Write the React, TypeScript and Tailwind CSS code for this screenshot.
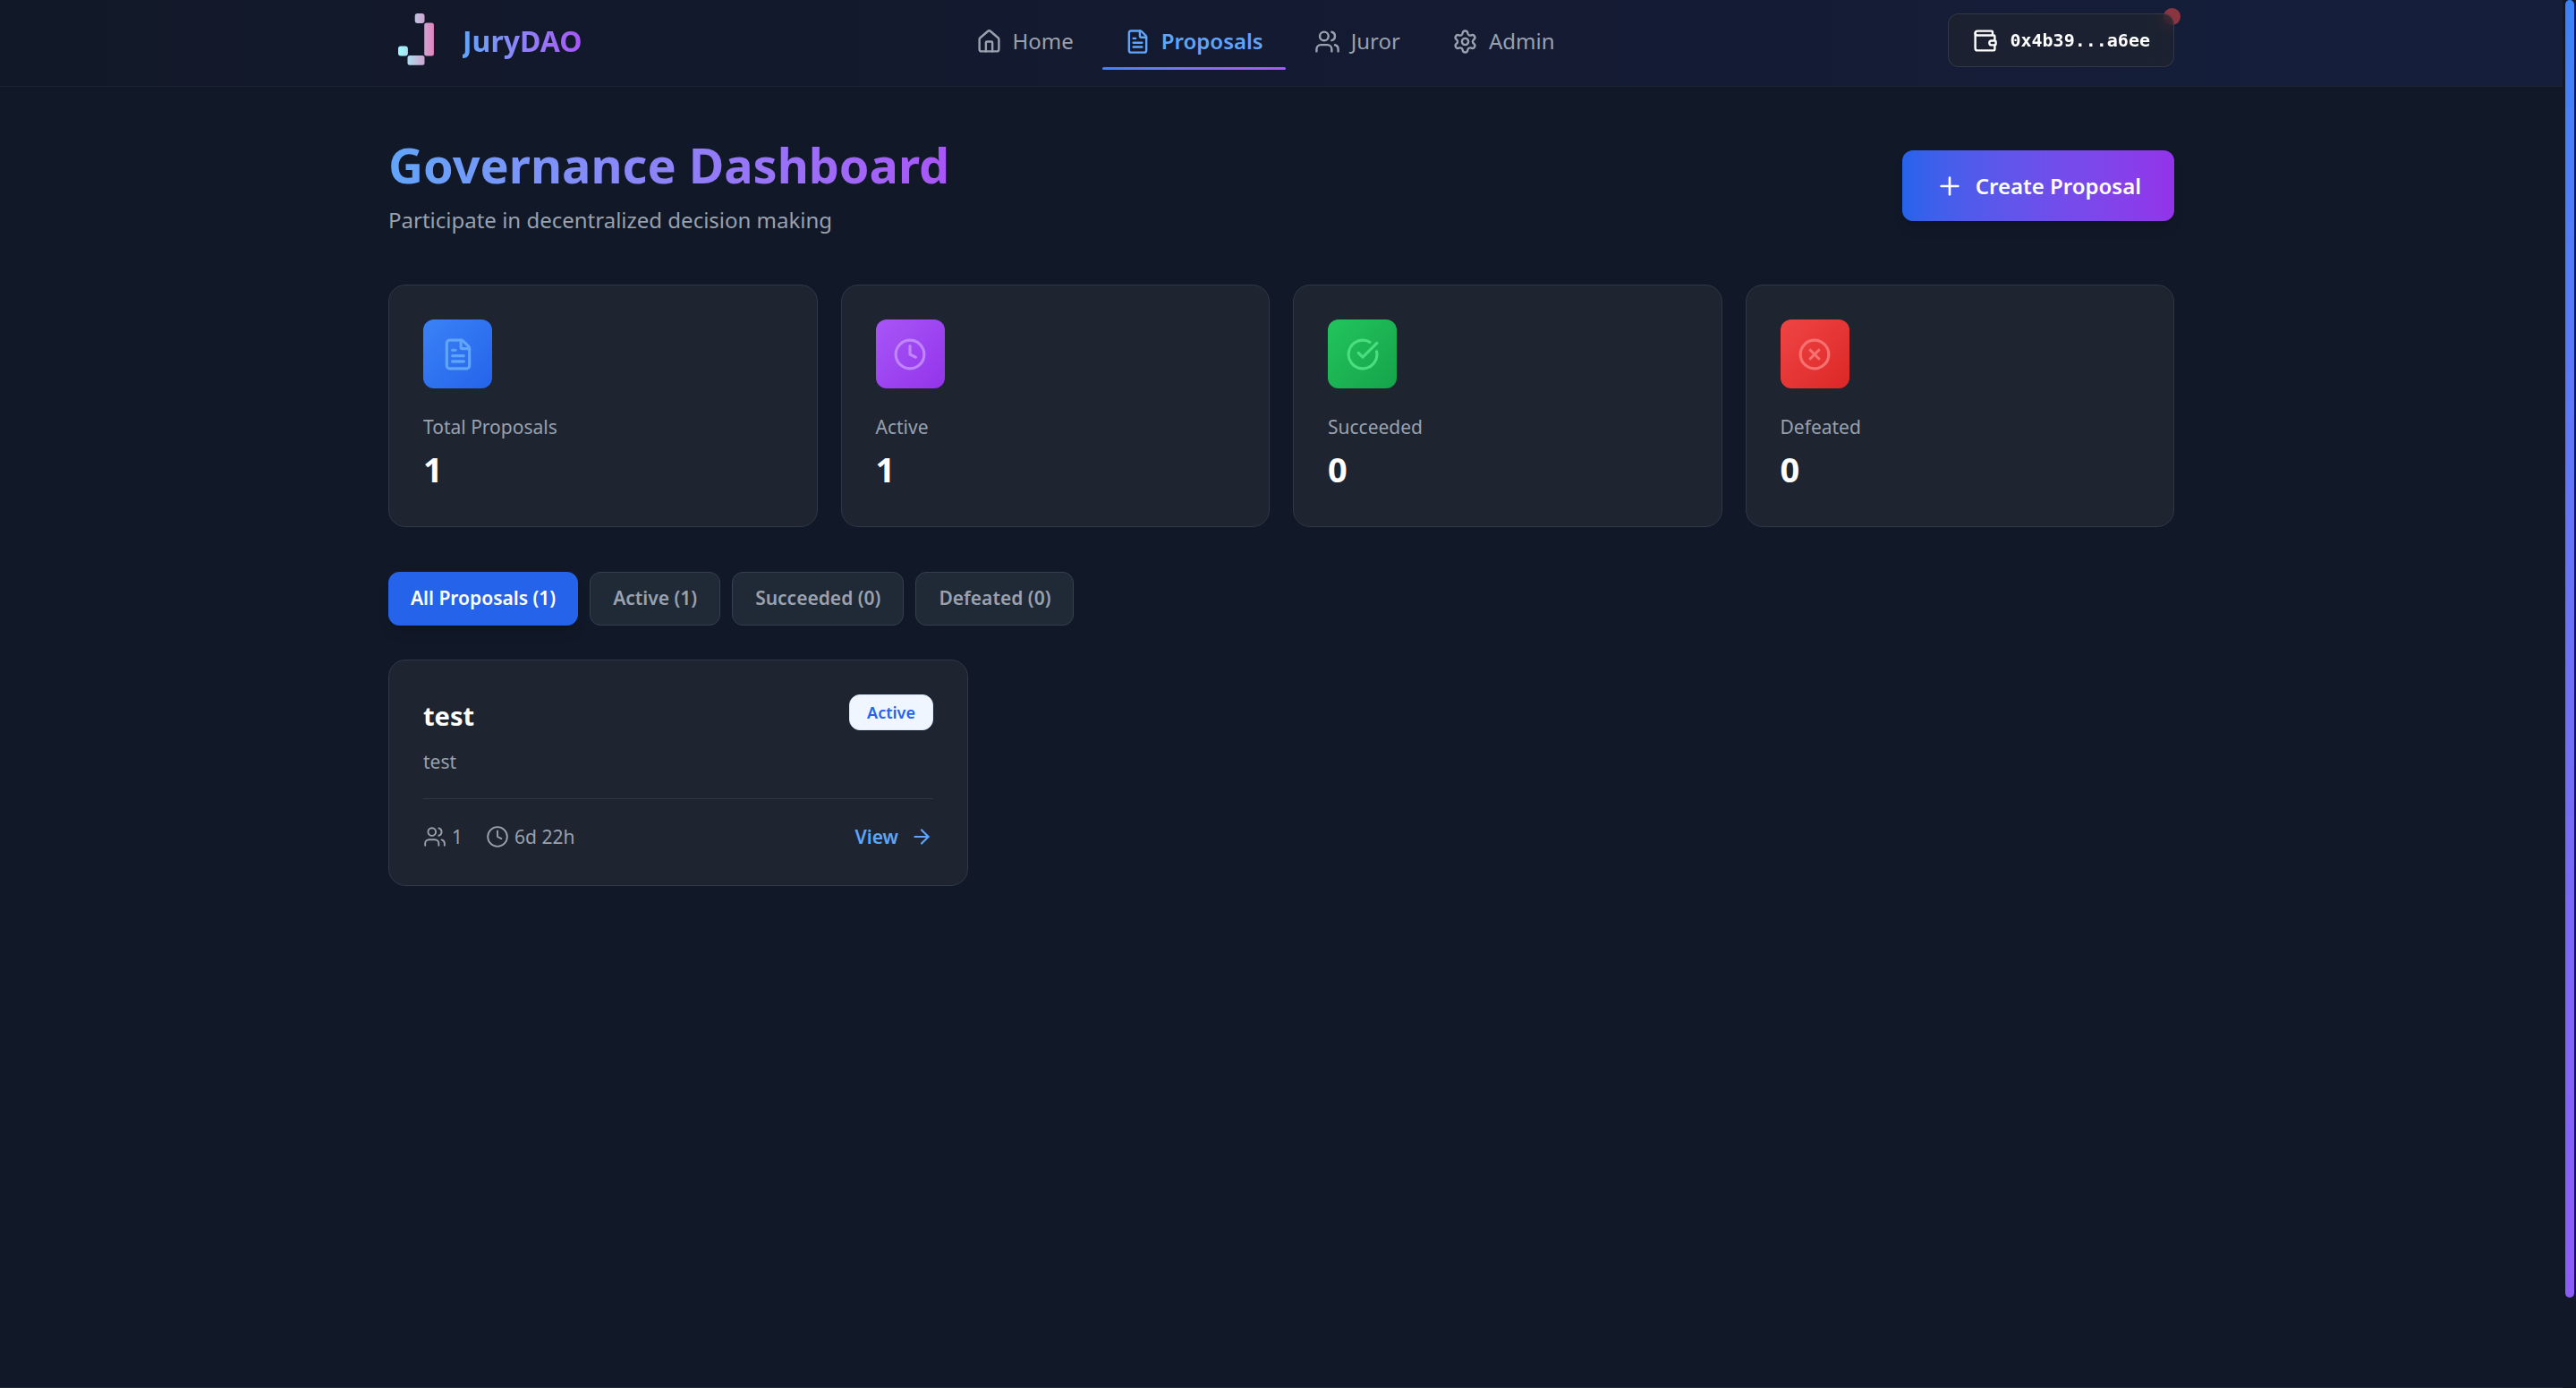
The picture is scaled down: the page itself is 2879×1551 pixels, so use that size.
import {
  ArrowRight,
  CircleCheckBig,
  CircleX,
  Clock,
  FileText,
  House,
  Plus,
  Settings,
  Users,
  Wallet,
  type LucideIcon,
} from "lucide-react";

const navItems: { label: string; icon: LucideIcon; active?: boolean }[] = [
  { label: "Home", icon: House },
  { label: "Proposals", icon: FileText, active: true },
  { label: "Juror", icon: Users },
  { label: "Admin", icon: Settings },
];

const stats: { label: string; value: number; icon: LucideIcon; tile: string }[] = [
  { label: "Total Proposals", value: 1, icon: FileText, tile: "from-[#3b82f6] to-[#2563eb] text-[#60a5fa]" },
  { label: "Active", value: 1, icon: Clock, tile: "from-[#a855f7] to-[#9333ea] text-[#c084fc]" },
  { label: "Succeeded", value: 0, icon: CircleCheckBig, tile: "from-[#22c55e] to-[#16a34a] text-[#4ade80]" },
  { label: "Defeated", value: 0, icon: CircleX, tile: "from-[#ef4444] to-[#dc2626] text-[#f87171]" },
];

const filters = ["All Proposals (1)", "Active (1)", "Succeeded (0)", "Defeated (0)"];

function Logo() {
  return (
    <svg width="64" height="72" viewBox="0 0 64 72" aria-hidden="true">
      <defs>
        <linearGradient id="logo-fill" gradientUnits="userSpaceOnUse" x1="14" y1="0" x2="51" y2="0">
          <stop offset="0" stopColor="#a0f4fb" />
          <stop offset="1" stopColor="#e283be" />
        </linearGradient>
      </defs>
      <g fill="url(#logo-fill)">
        <rect x="29.7" y="6" width="10.8" height="11" rx="3" />
        <rect x="40.2" y="16.4" width="10.7" height="37.2" rx="2.5" />
        <rect x="21.5" y="53" width="19" height="10.8" rx="2.5" />
        <rect x="11" y="42.6" width="10.9" height="10.9" rx="3" />
      </g>
    </svg>
  );
}

function Header() {
  return (
    <header className="border-b border-[#1d2433] bg-linear-to-r from-[#111827] via-[#141a31] to-[#151f3c] pb-1.5">
      <div className="mx-auto flex h-[90px] max-w-[2048px] items-center justify-between px-[26px]">
        <a href="#" className="flex items-center gap-[19px]">
          <Logo />
          <span className="bg-linear-to-r from-[#60a5fa] to-[#a855f7] bg-clip-text text-[32px] leading-[45px] font-bold text-transparent">
            JuryDAO
          </span>
        </a>
        <nav className="flex items-center gap-1.5">
          {navItems.map(({ label, icon: Icon, active }) => (
            <a
              key={label}
              href="#"
              aria-current={active ? "page" : undefined}
              className={
                active
                  ? "relative flex h-[66px] items-center gap-3 px-[25px] pt-0.5 text-2xl font-semibold text-[#60a5fa]"
                  : "relative flex h-[66px] items-center gap-3 px-[26px] pt-0.5 text-2xl text-gray-400"
              }
            >
              <Icon size={29} />
              {label}
              {active && (
                <span className="absolute inset-x-0 bottom-0 h-[3px] rounded-full bg-linear-to-r from-[#3b82f6] to-[#a855f7]" />
              )}
            </a>
          ))}
        </nav>
        <div className="relative">
          <span className="absolute -top-1.5 -right-[7px] size-[19px] rounded-full bg-[#8b3540]" />
          <button
            type="button"
            className="relative flex h-[60px] items-center gap-[13px] rounded-xl border border-white/10 bg-[#20242b]/60 px-[26px] font-['DejaVu_Sans_Mono','Liberation_Mono',monospace] text-xl font-semibold text-white backdrop-blur-sm"
          >
            <Wallet size={29} />
            0x4b39...a6ee
          </button>
        </div>
      </div>
    </header>
  );
}

function StatCard({ label, value, icon: Icon, tile }: (typeof stats)[number]) {
  return (
    <div className="rounded-[19px] border border-[#303746] bg-[#1e2531] p-[38px]">
      <div className={"mb-[27px] flex size-[77px] items-center justify-center rounded-xl bg-linear-to-br " + tile}>
        <Icon size={38} />
      </div>
      <p className="mb-[5px] text-[21px] leading-8 text-gray-400">{label}</p>
      <p className="text-[38px] leading-[52px] font-bold text-white">{value}</p>
    </div>
  );
}

function ProposalCard() {
  return (
    <article className="rounded-[19px] border border-[#303746] bg-[#1e2531] p-[38px] text-[21px] leading-8 text-gray-400">
      <div className="mb-2.5 flex items-start justify-between">
        <h2 className="text-[29px] leading-[47px] font-bold text-white">test</h2>
        <span className="flex h-10 items-center rounded-xl border border-[#dbeafe] bg-[#eff6ff] px-[19px] text-lg font-semibold text-[#2563eb]">
          Active
        </span>
      </div>
      <p className="mb-[23px] leading-9">test</p>
      <div className="flex items-center justify-between border-t border-[#303746] pt-[26px]">
        <div className="flex items-center gap-[26px]">
          <span className="flex items-center gap-1.5">
            <Users size={26} strokeWidth={1.75} />1
          </span>
          <span className="flex items-center gap-1.5">
            <Clock size={26} strokeWidth={1.75} />
            6d 22h
          </span>
        </div>
        <a href="#" className="flex items-center gap-[13px] font-semibold text-[#60a5fa]">
          View
          <ArrowRight size={26} />
        </a>
      </div>
    </article>
  );
}

export default function App() {
  return (
    <div className="flex min-h-screen bg-[#111827] font-['Noto_Sans','Open_Sans',sans-serif]">
      <div className="flex min-w-0 flex-1 flex-col border-b border-gray-800">
        <Header />
        <main className="mx-auto w-full max-w-[2048px] px-[26px] pt-[51px]">
          <div className="mb-[51px] flex items-center justify-between">
            <div>
              <h1 className="mb-[5px] w-fit bg-linear-to-r from-[#60a5fa] to-[#a855f7] bg-clip-text text-[54px] leading-[72px] font-bold text-transparent">
                Governance Dashboard
              </h1>
              <p className="text-2xl leading-[42px] text-gray-400">Participate in decentralized decision making</p>
            </div>
            <button
              type="button"
              className="flex h-[79px] items-center gap-[13px] rounded-xl bg-linear-to-r from-[#2563eb] to-[#9333ea] px-[37px] text-2xl font-semibold text-white shadow-lg"
            >
              <Plus size={32} />
              Create Proposal
            </button>
          </div>
          <section className="mb-[50px] grid grid-cols-4 gap-[26px]">
            {stats.map((stat) => (
              <StatCard key={stat.label} {...stat} />
            ))}
          </section>
          <div className="mb-[38px] flex gap-[13px]">
            {filters.map((label, index) => (
              <button
                key={label}
                type="button"
                aria-pressed={index === 0}
                className={
                  index === 0
                    ? "h-[60px] rounded-xl border border-[#2563eb] bg-[#2563eb] px-6 text-[21px] font-semibold text-white shadow-lg"
                    : "h-[60px] rounded-xl border border-[#334050] bg-[#202936] px-[25px] text-[21px] font-semibold text-gray-400"
                }
              >
                {label}
              </button>
            ))}
          </div>
          <section className="grid grid-cols-3 gap-[26px]">
            <ProposalCard />
          </section>
        </main>
      </div>
      <div className="flex w-[15px] pr-0.5 pl-[3px]" aria-hidden="true">
        <div className="h-[93.5%] w-full rounded-full bg-linear-to-b from-[#3b82f6] to-[#8b5cf6]" />
      </div>
    </div>
  );
}
